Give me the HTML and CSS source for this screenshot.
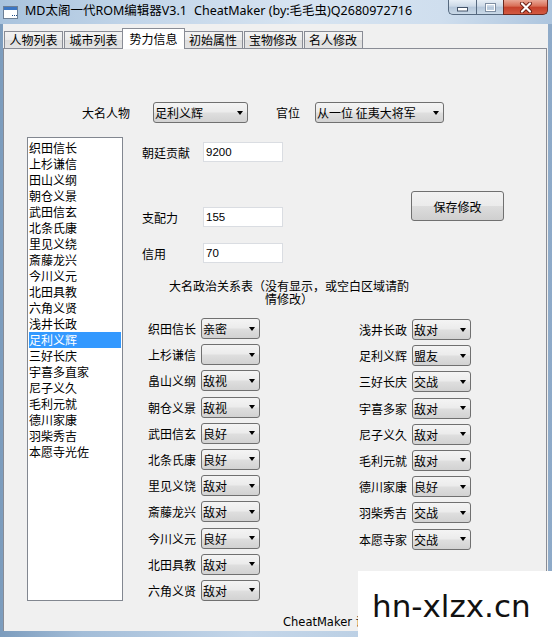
FILE: index.html
```html
<!DOCTYPE html>
<html lang="zh-CN">
<head>
  <meta charset="UTF-8">
  <title>MD太阁一代ROM编辑器V3.1</title>
  <link rel="stylesheet" href="styles.css">
</head>
<body>
  <div class="window">
    <div class="titlebar">
      <svg class="app-icon" width="15" height="13" viewBox="0 0 15 13">
        <rect x="0.5" y="0.5" width="14" height="12" fill="#fff" stroke="#6d7f95"/>
        <rect x="1" y="1" width="13" height="3" fill="#3b76c4"/>
        <rect x="9" y="9" width="1" height="1" fill="#1f4e8c"/>
        <rect x="11" y="9" width="1" height="1" fill="#1f4e8c"/>
        <rect x="13" y="9" width="1" height="1" fill="#1f4e8c"/>
      </svg>
      <div class="title">MD太阁一代ROM编辑器V3.1<span class="title-by">CheatMaker (by:毛毛虫)Q2680972716</span></div>
      <div class="winbtns">
        <div class="wb wb-min">
          <svg width="11" height="5" viewBox="0 0 11 5"><rect x="0.5" y="0.5" width="10" height="3.5" fill="#fff" stroke="#44546a"/></svg>
        </div>
        <div class="wb wb-max">
          <svg width="11" height="9" viewBox="0 0 11 9"><rect x="0.5" y="0.5" width="10" height="8" fill="none" stroke="#7e8ea2"/><rect x="1.5" y="1.5" width="8" height="6" fill="none" stroke="#fff"/></svg>
        </div>
        <div class="wb wb-close">
          <svg width="14" height="11" viewBox="0 0 14 11">
            <path d="M3 1.5 L11 9.5 M11 1.5 L3 9.5" stroke="#6a1d12" stroke-width="4" stroke-linecap="round"/>
            <path d="M3 1.5 L11 9.5 M11 1.5 L3 9.5" stroke="#fff" stroke-width="2.2" stroke-linecap="round"/>
          </svg>
        </div>
      </div>
    </div>

    <div class="client">
      <div class="tabs">
        <div class="tab">人物列表</div>
        <div class="tab">城市列表</div>
        <div class="tab active">势力信息</div>
        <div class="tab">初始属性</div>
        <div class="tab">宝物修改</div>
        <div class="tab">名人修改</div>
      </div>

      <div class="panel">
        <div class="top-row">
          <label class="lbl-daimyo">大名人物</label>
          <div class="combo combo-daimyo"><span>足利义辉</span><i class="arrow"></i></div>
          <label class="lbl-rank">官位</label>
          <div class="combo combo-rank"><span>从一位 征夷大将军</span><i class="arrow"></i></div>
        </div>

        <div class="main">
          <ul class="list">
            <li>织田信长</li>
            <li>上杉谦信</li>
            <li>田山义纲</li>
            <li>朝仓义景</li>
            <li>武田信玄</li>
            <li>北条氏康</li>
            <li>里见义绕</li>
            <li>斎藤龙兴</li>
            <li>今川义元</li>
            <li>北田具教</li>
            <li>六角义贤</li>
            <li>浅井长政</li>
            <li class="selected">足利义辉</li>
            <li>三好长庆</li>
            <li>宇喜多直家</li>
            <li>尼子义久</li>
            <li>毛利元就</li>
            <li>德川家康</li>
            <li>羽柴秀吉</li>
            <li>本愿寺光佐</li>
          </ul>

          <div class="side">
            <div class="fields-wrap">
              <div class="fields">
                <div class="field">
                  <label>朝廷贡献</label>
                  <input type="text" value="9200">
                </div>
                <div class="field field-power">
                  <label>支配力</label>
                  <input type="text" value="155">
                </div>
                <div class="field field-credit">
                  <label>信用</label>
                  <input type="text" value="70">
                </div>
              </div>
              <button class="save-btn">保存修改</button>
            </div>

            <p class="caption">大名政治关系表（没有显示，或空白区域请酌情修改）</p>

            <div class="relations">
              <div class="rel-col">
                <div class="rel"><label>织田信长</label><div class="combo"><span>亲密</span><i class="arrow"></i></div></div>
                <div class="rel"><label>上杉谦信</label><div class="combo"><span></span><i class="arrow"></i></div></div>
                <div class="rel"><label>畠山义纲</label><div class="combo"><span>敌视</span><i class="arrow"></i></div></div>
                <div class="rel"><label>朝仓义景</label><div class="combo"><span>敌视</span><i class="arrow"></i></div></div>
                <div class="rel"><label>武田信玄</label><div class="combo"><span>良好</span><i class="arrow"></i></div></div>
                <div class="rel"><label>北条氏康</label><div class="combo"><span>良好</span><i class="arrow"></i></div></div>
                <div class="rel"><label>里见义饶</label><div class="combo"><span>敌对</span><i class="arrow"></i></div></div>
                <div class="rel"><label>斎藤龙兴</label><div class="combo"><span>敌对</span><i class="arrow"></i></div></div>
                <div class="rel"><label>今川义元</label><div class="combo"><span>良好</span><i class="arrow"></i></div></div>
                <div class="rel"><label>北田具教</label><div class="combo"><span>敌对</span><i class="arrow"></i></div></div>
                <div class="rel"><label>六角义贤</label><div class="combo"><span>敌对</span><i class="arrow"></i></div></div>
              </div>
              <div class="rel-col right">
                <div class="rel"><label>浅井长政</label><div class="combo"><span>敌对</span><i class="arrow"></i></div></div>
                <div class="rel"><label>足利义辉</label><div class="combo"><span>盟友</span><i class="arrow"></i></div></div>
                <div class="rel"><label>三好长庆</label><div class="combo"><span>交战</span><i class="arrow"></i></div></div>
                <div class="rel"><label>宇喜多家</label><div class="combo"><span>敌对</span><i class="arrow"></i></div></div>
                <div class="rel"><label>尼子义久</label><div class="combo"><span>敌对</span><i class="arrow"></i></div></div>
                <div class="rel"><label>毛利元就</label><div class="combo"><span>敌对</span><i class="arrow"></i></div></div>
                <div class="rel"><label>德川家康</label><div class="combo"><span>良好</span><i class="arrow"></i></div></div>
                <div class="rel"><label>羽柴秀吉</label><div class="combo"><span>交战</span><i class="arrow"></i></div></div>
                <div class="rel"><label>本愿寺家</label><div class="combo"><span>交战</span><i class="arrow"></i></div></div>
              </div>
            </div>
          </div>
        </div>

        <div class="footer"><span class="footer-text">CheatMaker 设计制作</span></div>
      </div>
    </div>
  </div>

  <div class="watermark">hn-xlzx.cn</div>
</body>
</html>
```

FILE: styles.css
```css
body {
  margin: 0;
  width: 552px;
  height: 637px;
  overflow: hidden;
  position: relative;
  font-family: "Liberation Sans", "Noto Sans CJK SC", sans-serif;
  font-size: 12px;
  color: #000;
  background: linear-gradient(90deg, #7c9cbd 0%, #a3bdd8 15%, #c4d6e9 45%, #b8cde2 75%, #8eaac8 100%);
}
.window {
  display: flex;
  flex-direction: column;
  height: 637px;
}

/* title bar */
.titlebar {
  height: 24px;
  display: flex;
  align-items: flex-start;
  background: linear-gradient(90deg, #a9c3dd 0%, #c2d5e9 25%, #d7e4f1 55%, #cfdeee 80%, #adc5de 100%);
}
.app-icon {
  margin: 6px 0 0 3px;
}
.title {
  margin-left: 7px;
  line-height: 22px;
  font-family: "Noto Sans", "Noto Sans CJK SC", sans-serif;
  font-size: 12.5px;
  white-space: nowrap;
}
.title-by {
  margin-left: 7px;
}
.winbtns {
  margin-left: auto;
  margin-right: 4px;
  display: flex;
}
.wb {
  height: 15px;
  box-sizing: border-box;
  display: flex;
  align-items: center;
  justify-content: center;
  border: 1px solid #56697f;
  border-top: none;
}
.wb-min, .wb-max {
  background: linear-gradient(#e8eff7, #ccd9e7 45%, #b5c7da 50%, #c9d8e7);
}
.wb-min {
  width: 28px;
  border-radius: 0 0 0 5px;
  border-right: none;
  align-items: flex-end;
  padding-bottom: 2px;
}
.wb-max {
  width: 27px;
  border-right: none;
}
.wb-close {
  width: 45px;
  border-radius: 0 0 5px 0;
  border-color: #6b2a20;
  background: linear-gradient(#e9a897, #d86d55 45%, #c5402a 50%, #d35a42);
}

/* client area */
.client {
  flex: 1;
  margin: 0 4px 6px 3px;
  background: #f0f0f0;
  display: flex;
  flex-direction: column;
}
.tabs {
  height: 24px;
  box-sizing: border-box;
  padding: 4px 0 0 1px;
  display: flex;
  align-items: flex-end;
  position: relative;
  z-index: 1;
}
.tab {
  height: 17px;
  box-sizing: border-box;
  padding: 0 4.5px;
  margin-right: 1px;
  border: 1px solid #898c95;
  border-bottom: none;
  background: linear-gradient(#f3f3f3, #ebebeb 50%, #dddddd 50%, #e4e4e4);
  line-height: 16px;
  font-family: "Noto Sans CJK SC", sans-serif;
}
.tab.active {
  height: 21px;
  margin: 0 -1px -1px -2px;
  padding: 0 6px 0 6.5px;
  background: #fff;
  line-height: 19px;
}
.panel {
  flex: 1;
  margin-right: 1px;
  border: 1px solid #898c95;
  border-bottom: none;
  padding: 53px 0 0 23px;
}
label {
  font-family: "Noto Sans CJK SC", sans-serif;
  white-space: nowrap;
}

/* combo boxes */
.combo {
  height: 21px;
  box-sizing: border-box;
  display: flex;
  align-items: center;
  justify-content: space-between;
  padding: 0 4px 0 1px;
  border: 1px solid #707070;
  border-radius: 3px;
  background: linear-gradient(#f4f4f4, #ececec 45%, #dedede 55%, #d2d2d2);
  font-family: "Noto Sans CJK SC", sans-serif;
  white-space: nowrap;
}
.arrow {
  width: 0;
  height: 0;
  border-left: 3.5px solid transparent;
  border-right: 3.5px solid transparent;
  border-top: 4px solid #000;
}

.top-row {
  height: 21px;
  display: flex;
  align-items: center;
  margin-left: 55px;
}
.lbl-daimyo {
  margin-right: 23px;
}
.combo-daimyo {
  width: 95px;
}
.lbl-rank {
  margin: 0 15px 0 28px;
}
.combo-rank {
  width: 129px;
}

.main {
  display: flex;
  margin-top: 14px;
}
.list {
  margin: 0;
  width: 96px;
  height: 464px;
  box-sizing: border-box;
  border: 1px solid #828790;
  background: #fff;
  padding: 2px 1px;
  list-style: none;
  font-family: "Noto Sans CJK SC", sans-serif;
}
.list li {
  height: 16px;
  line-height: 16px;
  white-space: nowrap;
}
.list li.selected {
  background: #3399ff;
  color: #fff;
}

.side {
  margin-left: 19px;
  padding-top: 5px;
}
.fields-wrap {
  display: flex;
  align-items: flex-start;
}
.fields {
  display: flex;
  flex-direction: column;
}
.field {
  display: flex;
  align-items: center;
  height: 20px;
}
.field label {
  width: 61px;
}
.field input {
  width: 80px;
  height: 20px;
  box-sizing: border-box;
  margin: 0;
  padding: 0 2px;
  border: 1px solid #dadde2;
  background: #fff;
  font-family: "Liberation Sans", sans-serif;
  font-size: 11.5px;
}
.field-power {
  margin-top: 45px;
}
.field-credit {
  margin-top: 16px;
}
.save-btn {
  margin: 49px 0 0 128px;
  width: 93px;
  height: 30px;
  border: 1px solid #707070;
  border-radius: 3px;
  background: linear-gradient(#f2f2f2, #ebebeb 50%, #dddddd 50%, #cfcfcf);
  font-family: "Noto Sans CJK SC", sans-serif;
  font-size: 12px;
  padding: 0;
}

.caption {
  margin: 16px 0 0 24px;
  width: 246px;
  text-align: center;
  line-height: 13px;
  font-family: "Noto Sans CJK SC", sans-serif;
}

.relations {
  display: flex;
  margin-top: 13px;
}
.rel-col {
  display: flex;
  flex-direction: column;
  gap: 5.2px;
}
.rel-col.right {
  margin-left: 93px;
  padding-top: 1px;
}
.rel {
  display: flex;
  align-items: center;
  gap: 5px;
}
.rel label {
  width: 54px;
  text-align: right;
}
.rel .combo {
  width: 59px;
}

.footer {
  margin-top: 14px;
  padding-left: 256px;
  line-height: 14px;
}
/* the rest of this label sits under the watermark */
.footer-text {
  display: block;
  width: 75px;
  overflow: hidden;
  white-space: nowrap;
  font-family: "DejaVu Sans", "Noto Sans CJK SC", sans-serif;
  font-size: 11.5px;
}

.watermark {
  position: absolute;
  right: 0;
  bottom: 0;
  width: 194px;
  height: 66px;
  box-sizing: border-box;
  padding: 20px 0 0 14px;
  background: #fff;
  font-family: "DejaVu Sans", sans-serif;
  font-size: 31px;
  line-height: 30px;
  color: #111;
}
```
